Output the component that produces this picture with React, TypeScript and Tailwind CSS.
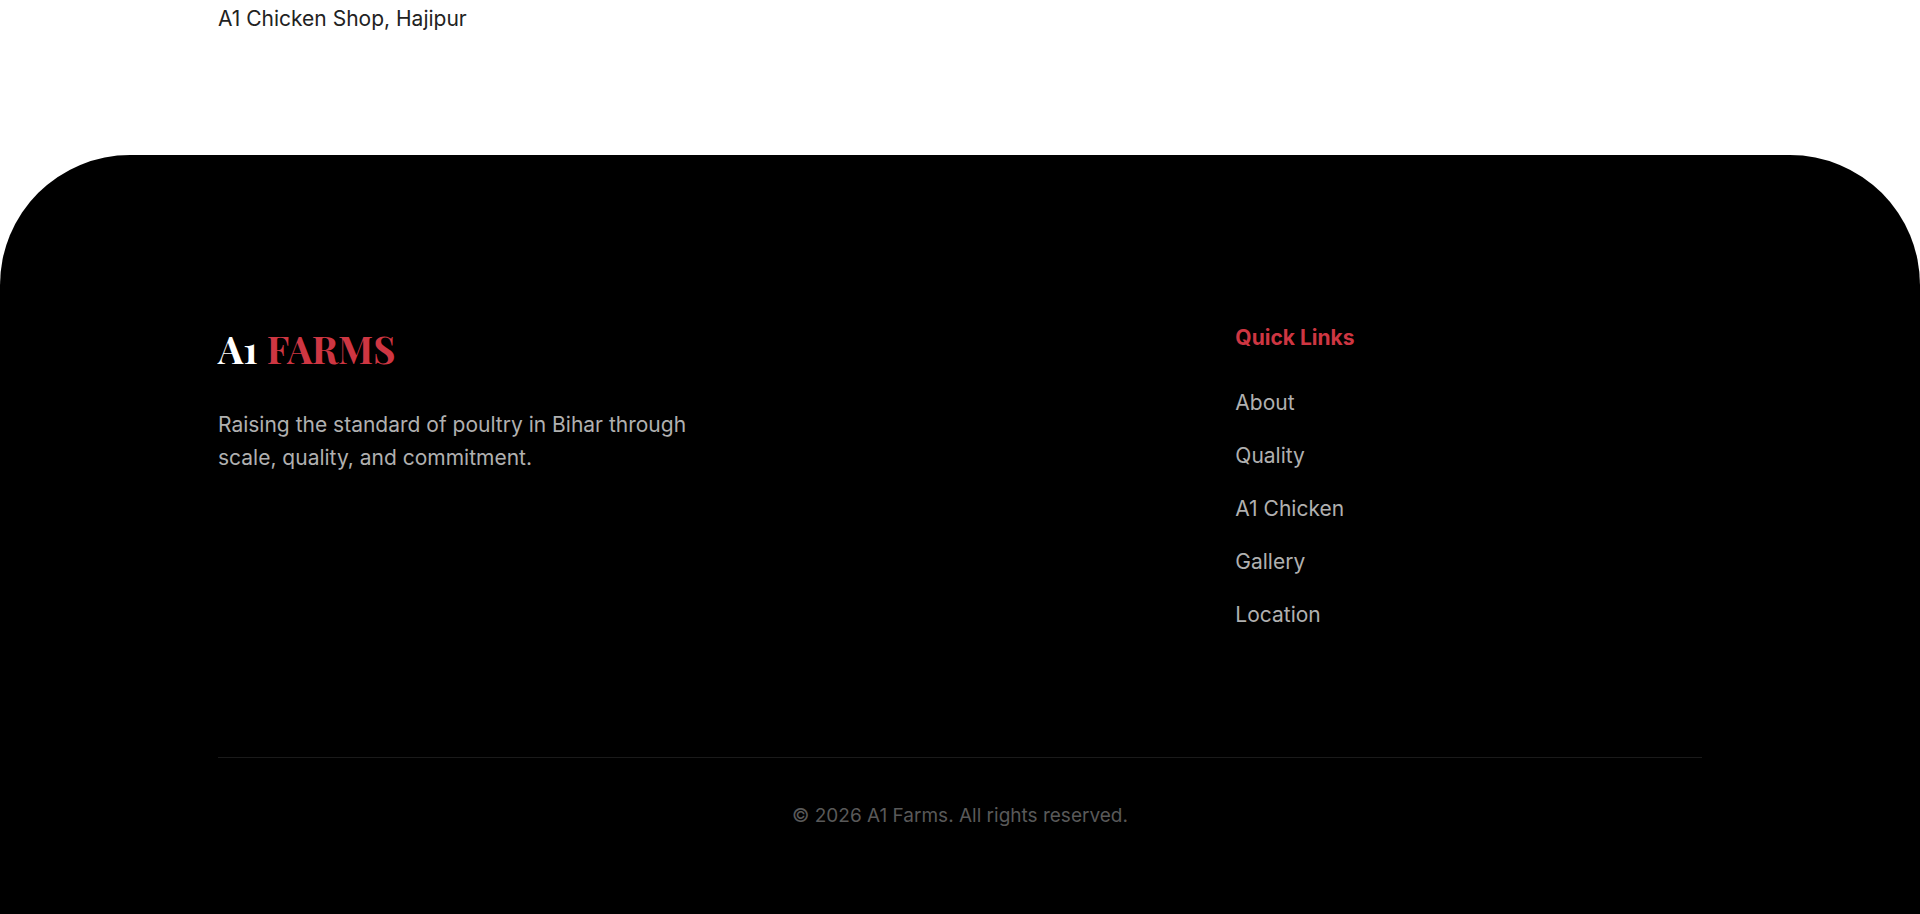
import React from 'react';

const links = [
  { label: 'About', href: '#about' },
  { label: 'Quality', href: '#quality' },
  { label: 'A1 Chicken', href: '#a1-chicken' },
  { label: 'Gallery', href: '#gallery' },
  { label: 'Location', href: '#location' },
];

const Footer: React.FC = () => (
  <footer className="grow rounded-t-[130px] bg-black px-6 pt-[166px] pb-20 text-[21px] leading-[33px] text-[#b0b0b0]">
    <div className="mx-auto max-w-[1484px]">
      <div className="grid grid-cols-[2fr_1fr] gap-[84px]">
        <div>
          <h2 className="mb-8 font-['Playfair_Display','Liberation_Serif',serif] text-[38px] leading-[55px] font-bold text-white">
            A1 <span className="text-[#ce3642]">FARMS</span>
          </h2>
          <p className="max-w-[500px]">
            Raising the standard of poultry in Bihar through scale, quality, and commitment.
          </p>
        </div>
        <nav aria-labelledby="quick-links">
          <h3 id="quick-links" className="mb-8 font-bold text-[#ce3642]">
            Quick Links
          </h3>
          <ul className="space-y-5">
            {links.map((link) => (
              <li key={link.href}>
                <a href={link.href}>{link.label}</a>
              </li>
            ))}
          </ul>
        </nav>
      </div>
      <p className="mt-[126px] border-t border-[#1a1a1a] pt-[42px] text-center text-[19px] leading-[31px] text-[#595959]">
        © 2026 A1 Farms. All rights reserved.
      </p>
    </div>
  </footer>
);

export default function App() {
  return (
    <div className="flex min-h-screen flex-col bg-white font-[Inter,sans-serif]">
      <section className="px-6 pt-0.5 pb-30">
        <div className="mx-auto max-w-[1484px]">
          <p className="text-[21px] leading-[33px] text-[#222222]">A1 Chicken Shop, Hajipur</p>
        </div>
      </section>
      <Footer />
    </div>
  );
}
